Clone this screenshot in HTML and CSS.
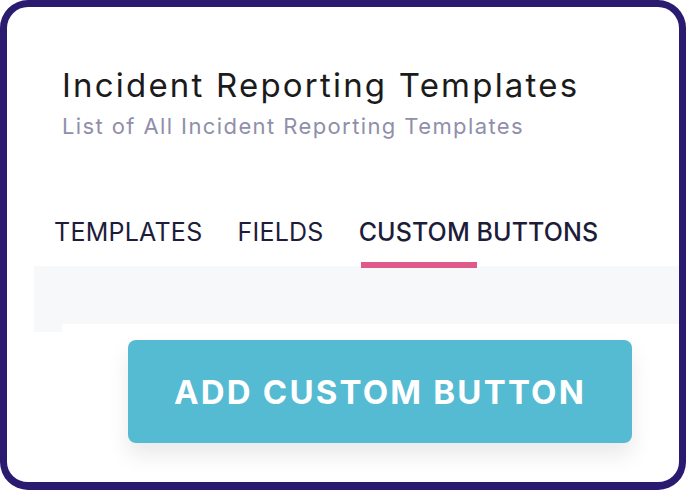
FILE: index.html
```html
<!DOCTYPE html>
<html>
<head>
<meta charset="utf-8">
<link rel="stylesheet" href="styles.css">
</head>
<body>
<div class="frame">
  <header class="head">
    <h1 class="title">Incident Reporting Templates</h1>
    <p class="subtitle">List of All Incident Reporting Templates</p>
  </header>
  <nav class="tabs">
    <div class="tab">TEMPLATES</div>
    <div class="tab">FIELDS</div>
    <div class="tab active">CUSTOM BUTTONS<span class="underline"></span></div>
  </nav>
  <div class="band"></div>
  <div class="band-tail"></div>
  <div class="actions">
    <button class="add-btn">ADD CUSTOM BUTTON</button>
  </div>
</div>
</body>
</html>
```

FILE: styles.css
```css
html, body {
  margin: 0;
  padding: 0;
  background: #ffffff;
}
body {
  font-family: "Inter", "Noto Sans", sans-serif;
}
.frame {
  width: 686px;
  height: 490px;
  box-sizing: border-box;
  border: 7px solid #2a1a70;
  border-bottom-width: 8px;
  border-radius: 28px;
  background: #ffffff;
  overflow: hidden;
  display: flex;
  flex-direction: column;
}
.head {
  padding: 59px 0 0 55px;
}
.title {
  margin: 0;
  font-size: 33px;
  line-height: 38px;
  font-weight: 400;
  letter-spacing: 2.2px;
  color: #1b1b1b;
}
.subtitle {
  margin: 8px 0 0 0;
  font-size: 22px;
  line-height: 28px;
  letter-spacing: 1.4px;
  color: #8f8fab;
}
.tabs {
  display: flex;
  gap: 35px;
  padding: 77px 0 0 47px;
}
.tab {
  font-size: 25px;
  line-height: 30px;
  letter-spacing: 0.25px;
  color: #1d1d3a;
  display: flex;
  flex-direction: column;
}
.tab.active {
  font-weight: 500;
  letter-spacing: 0.1px;
}
.underline {
  display: block;
  width: 116px;
  height: 6px;
  margin: 15px 0 0 2px;
  background: #e0598b;
  position: relative;
  z-index: 1;
}
.band {
  margin: -2px 0 0 27px;
  height: 58px;
  background: #f7f8fa;
}
.band-tail {
  margin-left: 27px;
  width: 28px;
  height: 8px;
  background: #f7f8fa;
}
.actions {
  padding: 8px 0 0 121px;
}
.add-btn {
  width: 504px;
  height: 103px;
  border: none;
  border-radius: 8px;
  background: #54bbd2;
  color: #ffffff;
  font-family: "Inter", "Noto Sans", sans-serif;
  font-size: 33px;
  font-weight: 700;
  letter-spacing: 2.2px;
  box-shadow: 0 12px 22px rgba(0, 0, 0, 0.09);
}
```
